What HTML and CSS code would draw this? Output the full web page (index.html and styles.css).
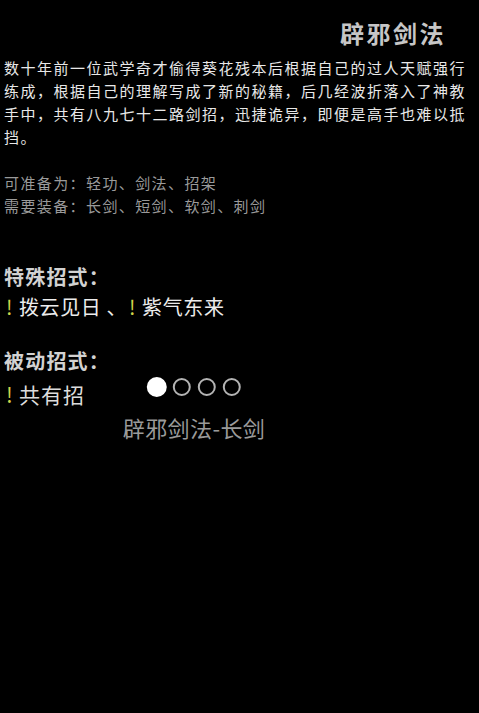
FILE: index.html
```html
<!DOCTYPE html>
<html lang="zh">
<head>
<meta charset="utf-8">
<title>辟邪剑法</title>
<link rel="stylesheet" href="styles.css">
</head>
<body>
<div class="page">
  <div class="title">辟邪剑法</div>
  <p class="desc">数十年前一位武学奇才偷得葵花残本后根据自己的过人天赋强行练成，根据自己的理解写成了新的秘籍，后几经波折落入了神教手中，共有八九七十二路剑招，迅捷诡异，即便是高手也难以抵挡。</p>
  <div class="meta">
    <div>可准备为：轻功、剑法、招架</div>
    <div>需要装备：长剑、短剑、软剑、刺剑</div>
  </div>
  <div class="heading h-special">特殊招式：</div>
  <div class="moves"><span class="bang">!</span>拨云见日 、<span class="bang">!</span>紫气东来</div>
  <div class="heading h-passive">被动招式：</div>
  <div class="moves m-passive"><span class="bang">!</span>共有招</div>
  <div class="pager">
    <div class="dots">
      <span class="dot on"></span>
      <span class="dot"></span>
      <span class="dot"></span>
      <span class="dot"></span>
    </div>
    <div class="pager-label">辟邪剑法-长剑</div>
  </div>
</div>
</body>
</html>
```
FILE: styles.css
```css
html, body {
  margin: 0;
  padding: 0;
  background: #000;
}
body {
  width: 479px;
  height: 713px;
  overflow: hidden;
  font-family: "Noto Sans CJK SC", "Noto Sans", sans-serif;
}
.page {
  position: relative;
  padding: 0 4px;
}
.title {
  padding-top: 18px;
  height: 30px;
  line-height: 30px;
  font-size: 24px;
  font-weight: 700;
  letter-spacing: 2.5px;
  color: #c6c6c6;
  text-align: right;
  padding-right: 29px;
}
.desc {
  margin: 8px 0 0;
  font-size: 15px;
  line-height: 23px;
  letter-spacing: 1.5px;
  color: #e8e8e8;
}
.meta {
  margin-top: 23px;
  font-size: 15px;
  line-height: 23px;
  letter-spacing: 1.4px;
  color: #9a9a9a;
}
.heading {
  font-size: 20px;
  font-weight: 700;
  line-height: 28px;
  letter-spacing: 1.2px;
  color: #d2d2d2;
}
.h-special {
  margin-top: 46px;
}
.h-passive {
  margin-top: 26px;
}
.moves {
  margin-top: 2px;
  font-size: 20px;
  line-height: 28px;
  letter-spacing: 0.6px;
  color: #ececec;
}
.m-passive {
  margin-top: 5px;
  font-size: 21px;
  letter-spacing: 1px;
  color: #dcdcdc;
}
.bang {
  display: inline-block;
  width: 13px;
  padding-left: 2px;
  color: #d0d44a;
}
.pager {
  position: absolute;
  top: 377px;
  left: 194px;
  transform: translateX(-50%);
  display: flex;
  flex-direction: column;
  align-items: center;
}
.dots {
  display: flex;
  align-items: center;
  gap: 7px;
}
.dot {
  width: 14px;
  height: 14px;
  border: 2px solid #b4b4b4;
  border-radius: 50%;
}
.dot.on {
  width: 20px;
  height: 20px;
  border: 0;
  background: #fff;
  margin-right: -1px;
}
.pager-label {
  margin-top: 16px;
  font-size: 22px;
  line-height: 28px;
  letter-spacing: 0.4px;
  color: #9a9a9a;
}
```
